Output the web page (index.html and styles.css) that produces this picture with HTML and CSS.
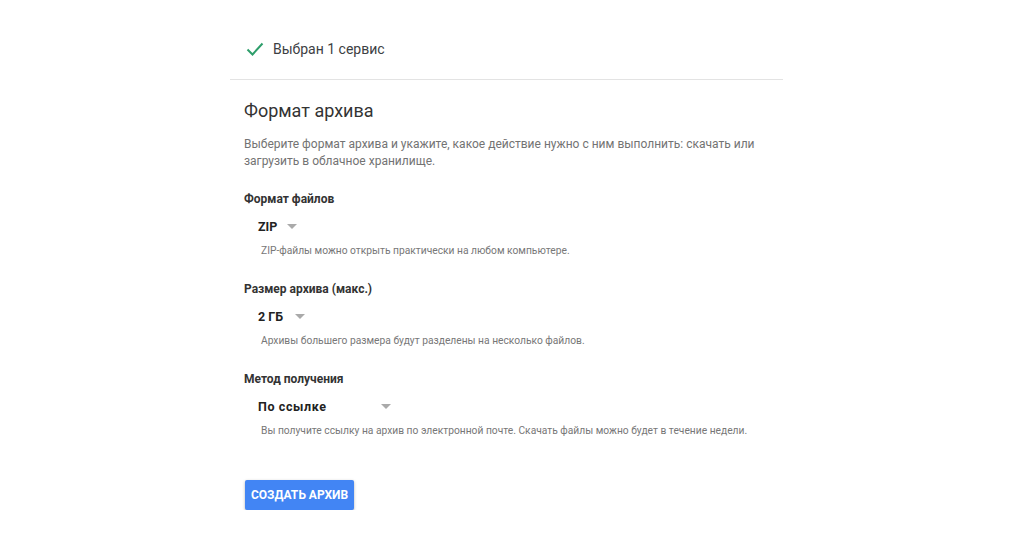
FILE: index.html
```html
<!DOCTYPE html>
<html lang="ru">
<head>
    <meta charset="UTF-8">
    <meta name="viewport" content="width=device-width, initial-scale=1.0">
    <title>Формат архива</title>
    <link rel="stylesheet" href="styles.css">
</head>
<body>
    <div class="panel">
        <div class="selected">
            <svg class="check" width="18" height="14" viewBox="0 0 18 14">
                <path d="M1.5 7.5 L6.5 12.5 L16.5 1.5" fill="none" stroke="#2e9e6b" stroke-width="2"/>
            </svg>
            <span>Выбран 1 сервис</span>
        </div>

        <div class="section">
            <h2 class="title">Формат архива</h2>
            <p class="desc">Выберите формат архива и укажите, какое действие нужно с ним выполнить: скачать или загрузить в облачное хранилище.</p>

            <div class="field">
                <div class="label">Формат файлов</div>
                <div class="select select-zip">
                    <span class="value">ZIP</span>
                    <span class="arrow"></span>
                </div>
                <div class="hint">ZIP-файлы можно открыть практически на любом компьютере.</div>
            </div>

            <div class="field">
                <div class="label">Размер архива (макс.)</div>
                <div class="select select-size">
                    <span class="value">2 ГБ</span>
                    <span class="arrow"></span>
                </div>
                <div class="hint">Архивы большего размера будут разделены на несколько файлов.</div>
            </div>

            <div class="field">
                <div class="label">Метод получения</div>
                <div class="select select-method">
                    <span class="value">По ссылке</span>
                    <span class="arrow"></span>
                </div>
                <div class="hint">Вы получите ссылку на архив по электронной почте. Скачать файлы можно будет в течение недели.</div>
            </div>

            <button class="btn">Создать архив</button>
        </div>
    </div>
</body>
</html>
```

FILE: styles.css
```css
body {
    margin: 0;
    background-color: #fff;
    font-family: Roboto, "Noto Sans", Arial, sans-serif;
    color: #333;
}

.panel {
    width: 553px;
    margin-left: 230px;
}

.selected {
    display: flex;
    align-items: center;
    height: 20px;
    margin-top: 39px;
    padding-bottom: 20px;
    border-bottom: 1px solid #e3e3e3;
    font-size: 14px;
    color: #3c4043;
}

.check {
    margin-left: 16px;
    margin-right: 9px;
}

.section {
    padding-left: 14px;
}

.title {
    margin: 19px 0 0;
    font-size: 18px;
    line-height: 24px;
    font-weight: 400;
    color: #333;
}

.desc {
    margin: 13px 0 0;
    font-size: 12px;
    line-height: 17px;
    color: #737373;
}

.field {
    margin-top: 20px;
}

.field + .field {
    margin-top: 22px;
}

.label {
    font-size: 12px;
    line-height: 18px;
    font-weight: 700;
    color: #333;
}

.select {
    display: flex;
    align-items: center;
    margin: 9px 0 0 14px;
    height: 18px;
}

.value {
    font-size: 12.5px;
    font-weight: 700;
    color: #222;
}

.select-zip .value {
    width: 29px;
}

.select-size .value {
    width: 37px;
}

.select-method .value {
    width: 123px;
    letter-spacing: 0.6px;
}

.arrow {
    width: 0;
    height: 0;
    border-left: 5px solid transparent;
    border-right: 5px solid transparent;
    border-top: 5px solid #aaa;
}

.hint {
    margin: 9px 0 0 17px;
    font-size: 10.25px;
    line-height: 14px;
    color: #777;
}

.btn {
    display: block;
    margin: 42px 0 0 1px;
    width: 109px;
    height: 30px;
    padding: 0;
    border: none;
    border-radius: 2px;
    background-color: #4285f4;
    box-shadow: 0 1px 3px rgba(0, 0, 0, 0.3);
    color: #fff;
    font-family: Roboto, Arial, sans-serif;
    font-size: 12px;
    font-weight: 700;
    text-transform: uppercase;
    cursor: pointer;
}
```
